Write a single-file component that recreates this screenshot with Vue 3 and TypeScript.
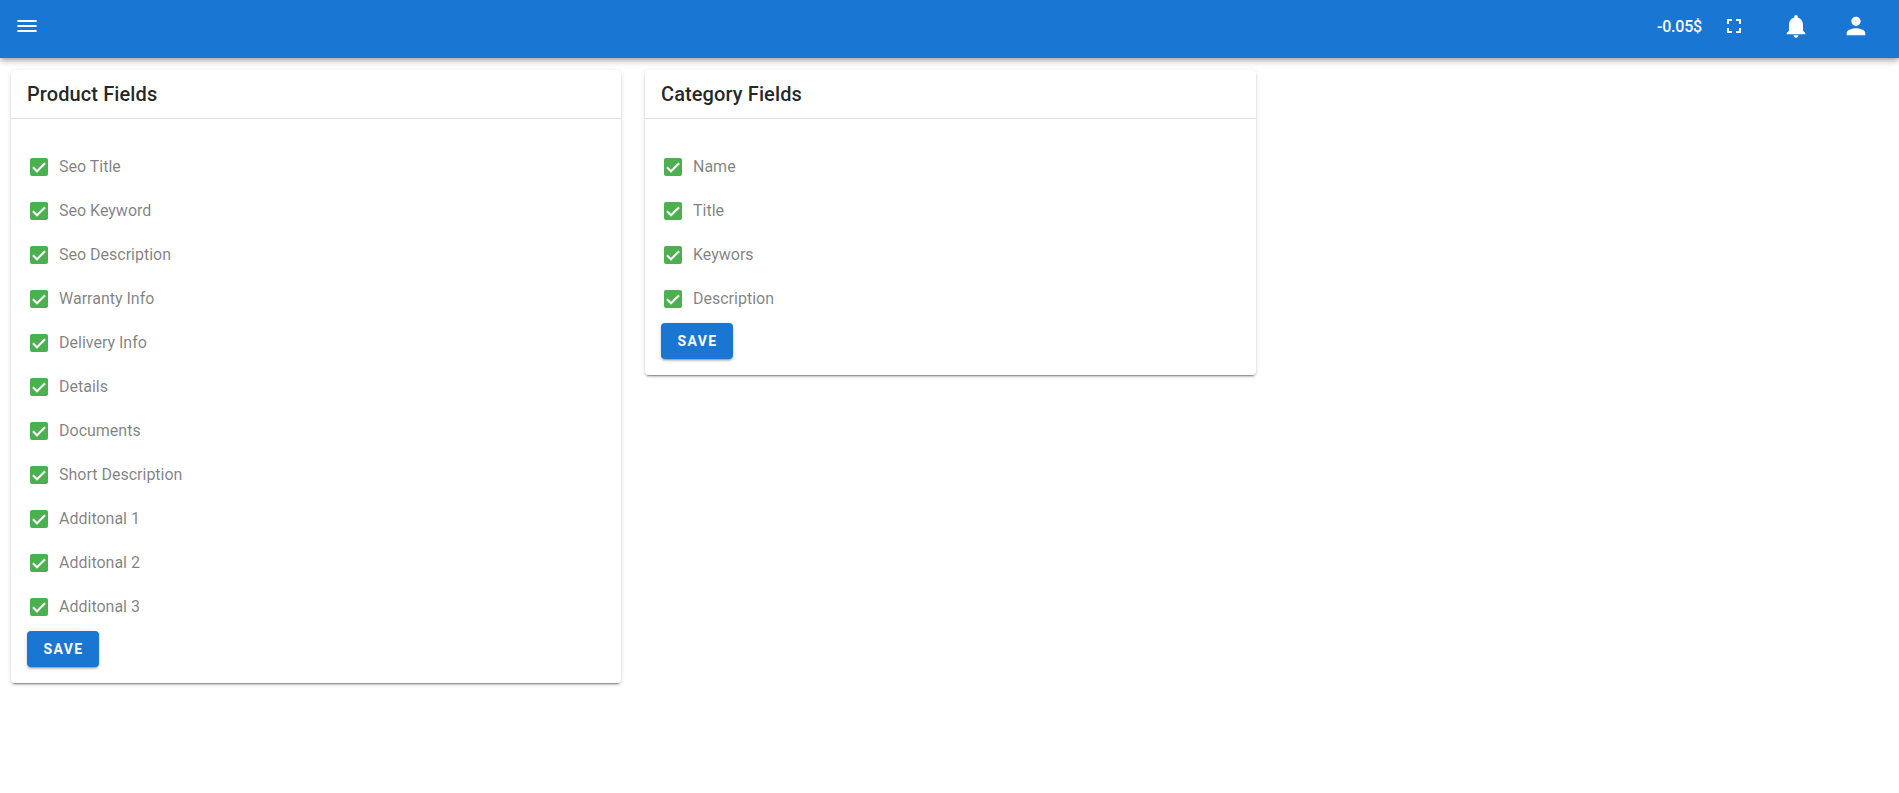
<script setup lang="ts">
const productFields: string[] = ['Seo Title','Seo Keyword','Seo Description','Warranty Info','Delivery Info','Details','Documents','Short Description','Additonal 1','Additonal 2','Additonal 3']
const categoryFields: string[] = ['Name','Title','Keywors','Description']
const cards = [
  { title: 'Product Fields', fields: productFields },
  { title: 'Category Fields', fields: categoryFields },
]
</script>

<template>
  <div class="page">
    <header class="bar">
      <button class="icon-btn menu" aria-label="menu">
        <svg width="24" height="24" viewBox="0 0 24 24"><path fill="#fff" d="M2.4 18h19.2v-2H2.4v2zm0-5h19.2v-2H2.4v2zm0-7v2h19.2V6H2.4z"/></svg>
      </button>
      <div class="spacer"></div>
      <span class="balance">-0.05$</span>
      <button class="icon-btn full" aria-label="fullscreen">
        <svg width="24" height="24" viewBox="0 0 24 24"><path fill="#fff" d="M5 5h5v2H7v3H5V5zm9 0h5v5h-2V7h-3V5zM5 14h2v3h3v2H5v-5zm12 0h2v5h-5v-2h3v-3z"/></svg>
      </button>
      <button class="icon-btn big bell" aria-label="notifications">
        <svg width="28" height="28" viewBox="0 0 24 24"><path fill="#fff" d="M12 22c1.1 0 2-.9 2-2h-4c0 1.1.9 2 2 2zm6-6v-5c0-3.07-1.63-5.64-4.5-6.32V4c0-.83-.67-1.5-1.5-1.5s-1.5.67-1.5 1.5v.68C7.64 5.36 6 7.92 6 11v5l-2 2v1h16v-1l-2-2z"/></svg>
      </button>
      <button class="icon-btn big user" aria-label="account">
        <svg width="28" height="28" viewBox="0 0 24 24"><path fill="#fff" d="M12 12c2.21 0 4-1.79 4-4s-1.79-4-4-4-4 1.79-4 4 1.79 4 4 4zm0 2c-2.67 0-8 1.34-8 4v2h16v-2c0-2.66-5.33-4-8-4z"/></svg>
      </button>
    </header>

    <main class="content">
      <section v-for="card in cards" :key="card.title" class="card">
        <h2 class="card-title">{{ card.title }}</h2>
        <div class="card-body">
          <label v-for="f in card.fields" :key="f" class="row">
            <span class="check">
              <svg width="14" height="14" viewBox="0 0 14 14"><path fill="none" stroke="#fff" stroke-width="2.1" d="M.9 7.2 5 11.2 13.1 3.2"/></svg>
            </span>
            <span class="label">{{ f }}</span>
          </label>
          <button class="save">SAVE</button>
        </div>
      </section>
    </main>
  </div>
</template>

<style scoped>
.page {
  font-family: Roboto, "Liberation Sans", sans-serif;
  min-height: 793px;
  background: #fff;
}
.bar {
  height: 58px;
  box-sizing: border-box;
  padding-bottom: 6px;
  background: #1976d2;
  display: flex;
  align-items: center;
  box-shadow: 0 2px 4px -1px rgba(0,0,0,.2), 0 4px 5px 0 rgba(0,0,0,.14), 0 1px 10px 0 rgba(0,0,0,.12);
  position: relative;
  color: #fff;
}
.spacer { flex: 1; }
.icon-btn {
  background: none;
  border: 0;
  padding: 0;
  width: 24px;
  height: 24px;
  display: flex;
}
.big { width: 28px; height: 28px; }
.menu { margin-left: 15px; }
.balance { font-size: 16px; font-weight: 500; letter-spacing: -0.2px; margin-right: 20px; }
.full { margin-right: 36px; }
.bell { margin-right: 32px; }
.user { margin-right: 29px; }
.content {
  display: grid;
  grid-template-columns: 610px 611px;
  align-items: start;
  gap: 24px;
  padding: 12px 11px;
}
.card {
  background: #fff;
  border-radius: 4px;
  box-shadow: 0 3px 1px -2px rgba(0,0,0,.3), 0 2px 2px 0 rgba(0,0,0,.14), 0 1px 5px 0 rgba(0,0,0,.12);
}
.card-title {
  margin: 0;
  height: 48px;
  padding: 0 16px;
  font-size: 20px;
  font-weight: 500;
  line-height: 48px;
  letter-spacing: 0.1px;
  color: rgba(0,0,0,.87);
  border-bottom: 1px solid #e0e0e0;
}
.card-body { padding: 25px 16px 16px; }
.row {
  display: flex;
  align-items: center;
  height: 44px;
  padding-left: 3px;
}
.check {
  width: 18px;
  height: 18px;
  margin-top: 2px;
  border-radius: 2px;
  background: #4caf50;
  display: flex;
  align-items: center;
  justify-content: center;
}
.label {
  margin-left: 11px;
  font-size: 16px;
  color: rgba(0,0,0,.5);
}
.save {
  display: block;
  width: 72px;
  height: 36px;
  margin-top: 3px;
  padding: 0 0 0 1px;
  border: 0;
  border-radius: 4px;
  background: #1976d2;
  color: #fff;
  font-family: inherit;
  font-size: 14px;
  font-weight: 700;
  letter-spacing: 1.4px;
  box-shadow: 0 3px 1px -2px rgba(0,0,0,.2), 0 2px 2px 0 rgba(0,0,0,.14), 0 1px 5px 0 rgba(0,0,0,.12);
}
</style>
